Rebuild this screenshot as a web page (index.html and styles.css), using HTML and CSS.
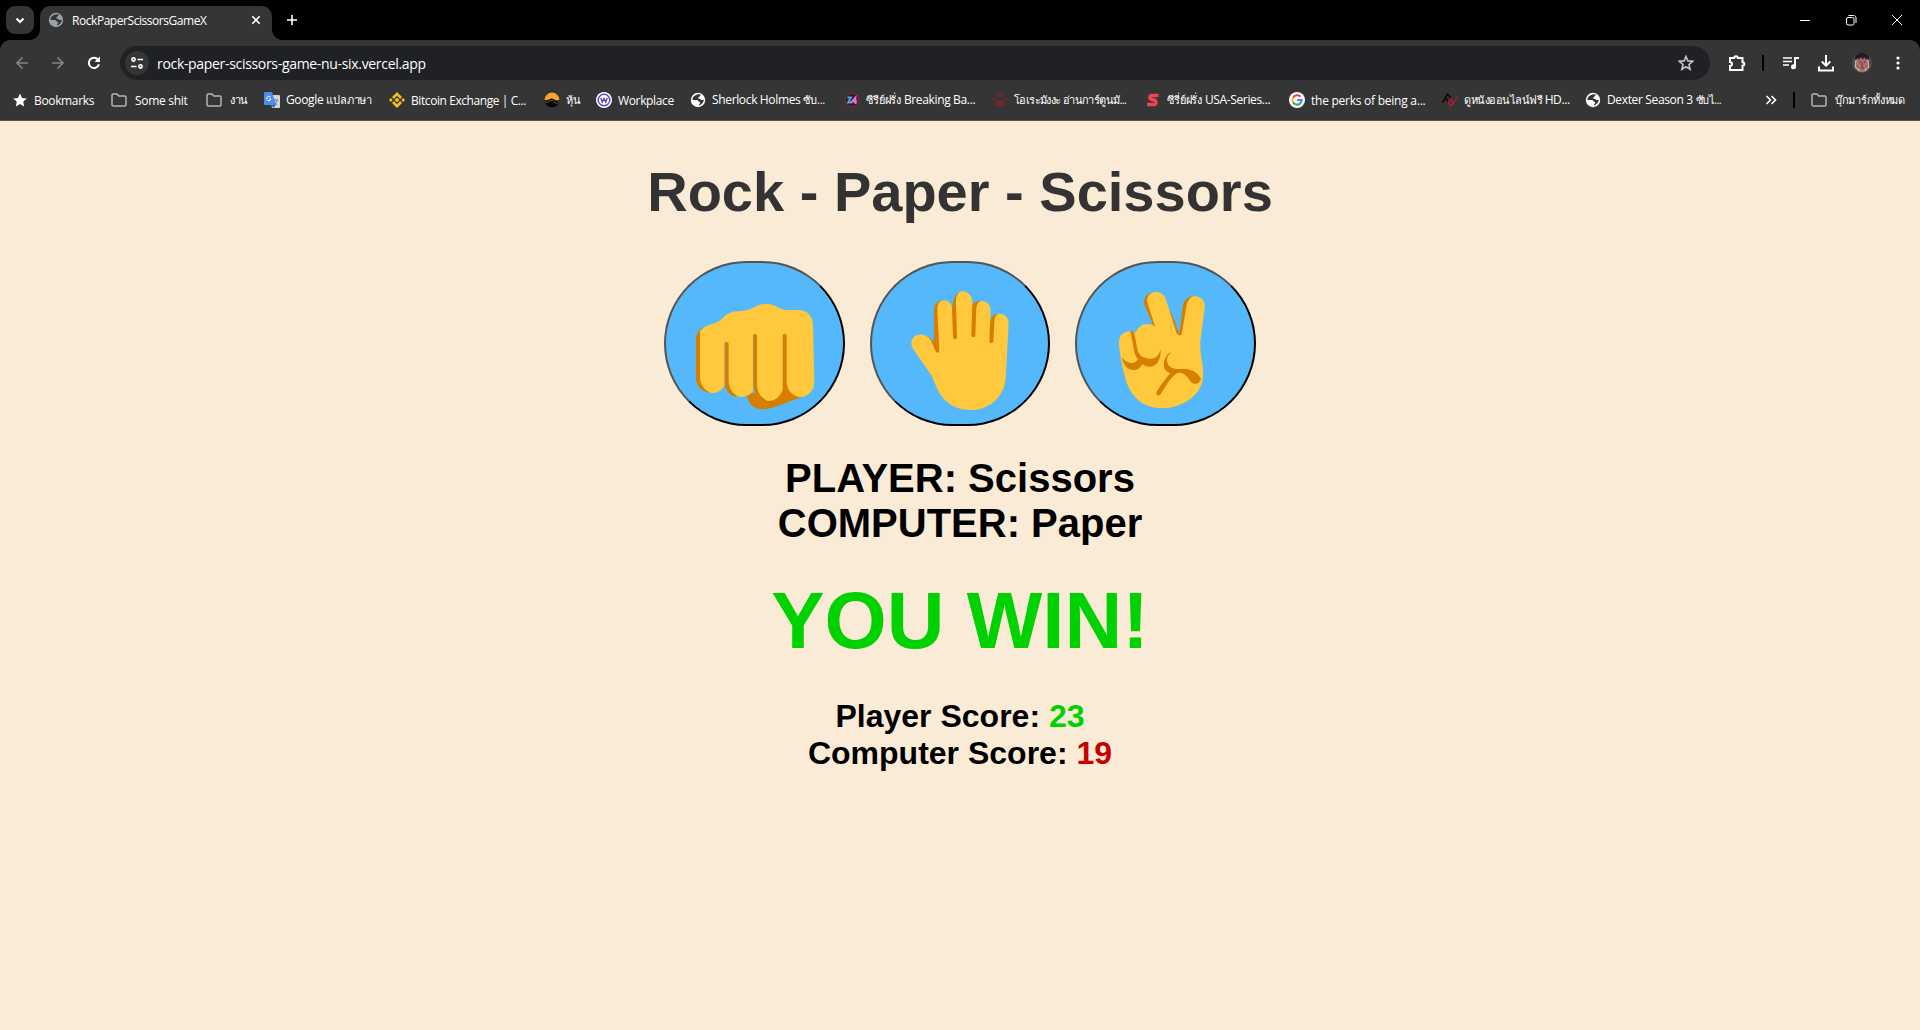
FILE: index.html
```html
<!DOCTYPE html>
<html lang="en">
<head>
<meta charset="utf-8">
<title>RockPaperScissorsGameX</title>
<link rel="stylesheet" href="styles.css">
</head>
<body>
<svg width="0" height="0" class="defs">
  <symbol id="globe" viewBox="0 0 16 16"><circle cx="8" cy="8" r="7.200" fill="currentColor"/><path class="land" d="M7.500 2.500c1.300-.5 2.700-.3 3.800.3-.6.7-1.800.8-1.800 1.700 0 1-1.500.6-1.500 1.500 0 .8 1.400.5 2.200 1 .9.600 1.200 1.200 2.300 1 .5 0 1-.3 1.300 0-.3 2.400-2.100 4.700-4.600 5.400-.5-.600-.1-1.300.5-1.700.8-.700.500-1.700-.5-1.900-1-.2-.9-1.600-2.200-1.700-1.500-.2-3 .2-4.600-.4.100-2.500 2.400-4.800 5.100-5.200z"/></symbol>
  <symbol id="folder" viewBox="0 0 16 14"><path d="M1 2.300C1 1.500 1.500 1 2.300 1H6l1.700 2h6c.8 0 1.300.5 1.300 1.300v7.400c0 .8-.5 1.300-1.300 1.300H2.300C1.500 13 1 12.500 1 11.700z" fill="none" stroke="#b5b5b5" stroke-width="1.500"/></symbol>
</svg>

<header class="browser">
  <div class="tabs">
    <div class="search-tabs"><svg width="10" height="7" viewBox="0 0 10 7"><path d="M1.500 1.500 5 5l3.500-3.500" class="line w2"/></svg></div>
    <div class="tab">
      <svg class="globe favicon" width="16" height="16"><use href="#globe"/></svg>
      <span class="tab-title">RockPaperScissorsGameX</span>
      <svg width="10" height="10" viewBox="0 0 10 10"><path d="m1.300 1.300 7.400 7.400m0-7.400L1.300 8.700" class="line w15"/></svg>
    </div>
    <svg class="new-tab" width="12" height="12" viewBox="0 0 12 12"><path d="M6 1v10M1 6h10" class="line w15"/></svg>
    <div class="window-buttons">
      <svg width="12" height="12" viewBox="0 0 12 12"><path d="M1 6.500h10" class="line"/></svg>
      <svg width="12" height="12" viewBox="0 0 12 12"><rect x="1.500" y="3.500" width="7.500" height="7.500" rx="1.500" class="line"/><path d="M3.500 1.500h5c1.500 0 2.500 1 2.500 2.500v5" class="line"/></svg>
      <svg width="12" height="12" viewBox="0 0 12 12"><path d="m1 1 10 10m0-10L1 11" class="line"/></svg>
    </div>
  </div>

  <div class="toolbar">
    <div class="nav">
      <svg class="dim" width="14" height="14" viewBox="0 0 14 14"><path d="M13 7H2m5.500-5.500L2 7l5.500 5.500" class="line w15"/></svg>
      <svg class="dim" width="14" height="14" viewBox="0 0 14 14"><path d="M1 7h11M6.500 1.500 12 7l-5.500 5.500" class="line w15"/></svg>
      <svg width="14" height="14" viewBox="0 0 14 14"><path d="M12 8.300A5.200 5.200 0 1 1 11 3.500L12.300 5" class="line w2"/><path d="M13 .5V6H7.500z" fill="currentColor"/></svg>
    </div>
    <div class="address">
      <div class="site-info"><svg width="14" height="12" viewBox="0 0 14 12"><circle cx="3.500" cy="2.500" r="1.600" class="line w15"/><path d="M7.500 2.500H13M1 9.500h5.500" class="line w15"/><circle cx="10.500" cy="9.500" r="1.600" class="line w15"/></svg></div>
      <span class="url">rock-paper-scissors-game-nu-six.vercel.app</span>
      <svg class="star" width="16" height="16" viewBox="0 0 16 16"><path d="m8 1.500 1.900 4.400 4.700.4-3.600 3.200 1.100 4.700L8 11.700l-4.100 2.500L5 9.500 1.400 6.300l4.700-.4z" class="line w15"/></svg>
    </div>
    <div class="actions">
      <svg width="18" height="18" viewBox="0 0 18 18"><path d="M2 4h4.200a1.800 1.800 0 0 1 3.600 0H14.500v4.200a1.800 1.800 0 0 1 0 3.600V16H2v-4a2 2 0 0 0 0-4z" class="line w2"/></svg>
      <i class="divider"></i>
      <svg width="16" height="14" viewBox="0 0 16 14"><path d="M0 2h9M0 5.500h9M0 9h6" class="line w15"/><path d="M12 11V2h4" class="line w2"/><circle cx="10.500" cy="10.800" r="2.500" fill="currentColor"/></svg>
      <svg width="16" height="17" viewBox="0 0 16 17"><path d="M8 0v10M3.800 6.500 8 10.700l4.200-4.200M1 11.500V15.500h14v-4" class="line w2"/></svg>
      <svg width="20" height="20" viewBox="0 0 20 20"><circle cx="10" cy="10" r="10" fill="#4f4a58"/><path d="M5 6c0-3 10-3 10.500 0l-.5 7-3 6H8l-3-6z" fill="#a96f6c"/><path d="M3 7C2 2 7 0 10 0s8 2 7 7l-2-2-1 2-2-3-1 3-2-3-2 3-1-2z" fill="#201d25"/><path d="M7 9h2m3 0h2m-4 0v5m-1 1h3" stroke="#63383f" fill="none"/><path d="M4 7 3.500 14l4 4M16 7l.5 7-4 4" stroke="#eda996" stroke-width="1.500" fill="none"/></svg>
      <svg width="4" height="14" viewBox="0 0 4 14" fill="currentColor"><circle cx="2" cy="2" r="1.600"/><circle cx="2" cy="7" r="1.600"/><circle cx="2" cy="12" r="1.600"/></svg>
    </div>
  </div>

  <nav class="bookmarks">
    <div class="bookmark-list">
      <a><svg width="16" height="16" viewBox="0 0 16 16"><path d="m8 1.500 2 4.500 4.800.5-3.600 3.200 1 4.800L8 12l-4.200 2.500 1-4.800L1.200 6.500 6 6z" fill="#fff"/></svg><span>Bookmarks</span></a>
      <a class="loose"><svg width="16" height="14"><use href="#folder"/></svg><span>Some shit</span></a>
      <a class="loose"><svg width="16" height="14"><use href="#folder"/></svg><span class="th">งาน</span></a>
      <a><svg width="16" height="16" viewBox="0 0 16 16"><path d="M6 3h9q1 0 1 1v11q0 1-1 1H8z" fill="#d5d5d5"/><path d="M9 8h5m-2.500-1v1m2 0q-1 3-3 4m-.5-3 3 4" stroke="#6c858c" fill="none"/><path d="M1 0h7l4 13H1q-1 0-1-1V1q0-1 1-1z" fill="#4b8bf5"/><path d="m8 13h4l-3 3z" fill="#2456b3"/><path d="M6.500 5A2.200 2.200 0 1 0 7 7H5" stroke="#fff" fill="none"/></svg><span>Google <b class="th wide">แปลภาษา</b></span></a>
      <a><svg width="16" height="16" viewBox="0 0 16 16" fill="#f3ba2f"><path d="m8 0 5 5-1.900 1.900L8 3.800 4.900 6.900 3 5zM8 16l5-5-1.900-1.900L8 12.200 4.900 9.100 3 11zM0 8l1.900-1.900L3.800 8 1.900 9.900zm12.200 0 1.900-1.900L16 8l-1.900 1.900zM8 5.500 10.500 8 8 10.500 5.500 8z"/></svg><span class="tight">Bitcoin Exchange | C...</span></a>
      <a><svg width="16" height="16" viewBox="0 0 16 16"><circle cx="8" cy="8" r="7.500" fill="#080808"/><path d="M.5 8a7.500 7.500 0 0 1 15 0C11 10 9 5 6 7Q3 9 .5 8z" fill="#f5a52d"/><path d="M1 10q3 1 5-1t5 1 4-1" stroke="#66543c" fill="none"/></svg><span class="th">หุ้น</span></a>
      <a><svg width="16" height="16" viewBox="0 0 16 16"><circle cx="8" cy="8" r="8" fill="#fff"/><circle cx="8" cy="8" r="5.800" stroke="#5744c7" stroke-width="1.400" fill="none"/><path d="m4.800 6 1.500 4L8 6.500 9.700 10l1.500-4" stroke="#4931ba" stroke-width="1.300" fill="none"/></svg><span>Workplace</span></a>
      <a><svg class="globe" width="16" height="16"><use href="#globe"/></svg><span>Sherlock Holmes <b class="th wide">ซับ...</b></span></a>
      <a><svg width="16" height="16" viewBox="0 0 16 16"><circle cx="8" cy="8" r="7" stroke="#a6232e" fill="#242536"/><path d="M3.500 5.500H7L4 10.500h4" stroke="#48a5e5" stroke-width="1.800" fill="none"/><path d="M11.500 12V5.500L8 9.500h5" stroke="#ef71c9" stroke-width="1.800" fill="none"/></svg><span><b class="th wide">ซีรีย์ฝรั่ง</b> Breaking Ba...</span></a>
      <a><svg width="16" height="16" viewBox="0 0 16 16" fill="#6a2b2e"><ellipse cx="2.500" cy="7" rx="1.500" ry="2"/><ellipse cx="6" cy="3" rx="1.600" ry="2.300"/><ellipse cx="10.500" cy="3" rx="1.600" ry="2.300"/><ellipse cx="14" cy="7" rx="1.500" ry="2"/><path d="M8 7.500c3 0 5 3.500 5 5.500 0 3-3 1.500-5 1.500S3 16 3 13c0-2 2-5.500 5-5.500z"/></svg><span class="th snug">โอเระมังงะ อ่านการ์ตูนมั...</span></a>
      <a><svg width="16" height="16" viewBox="0 0 16 16"><path d="M13.500 3.500H7Q4.500 3.500 5 5.500t3 2.300 3 2.200-2 2.500H2" stroke="#ef4453" stroke-width="3.600" fill="none"/></svg><span><b class="th wide">ซีรี่ย์ฝรั่ง</b> USA-Series...</span></a>
      <a><svg width="16" height="16" viewBox="0 0 16 16"><circle cx="8" cy="8" r="8" fill="#fff"/><g fill="none" stroke-width="2"><path d="M4 5.700A4.700 4.700 0 0 1 11.500 4.800" stroke="#ea4335"/><path d="M4 5.700a4.700 4.700 0 0 0 0 4.600" stroke="#fbbc05"/><path d="M4 10.300a4.700 4.700 0 0 0 7 1.300" stroke="#34a853"/><path d="M11 11.600A4.700 4.700 0 0 0 12.700 8H8" stroke="#4285f4"/></g></svg><span class="roomy">the perks of being a...</span></a>
      <a><svg width="16" height="16" viewBox="0 0 16 16" fill="none"><path d="M.5 10.500 5.500 2 9 6.500l-3 3L3.500 6" stroke="#090909" stroke-width="1.500"/><path d="m6 10 3-3.500L11 12l4.500-7.500M6 10l3 4 3-4" stroke="#a91f3b" stroke-width="1.300"/></svg><span class="tight"><b class="th">ดูหนังออนไลน์ฟรี</b> HD...</span></a>
      <a><svg class="globe" width="16" height="16"><use href="#globe"/></svg><span>Dexter Season 3 <b class="th">ซับไ...</b></span></a>
    </div>
    <div class="overflow">
      <svg width="12" height="10" viewBox="0 0 12 10"><path d="m1.500 1 4 4-4 4M6.500 1l4 4-4 4" class="line w15"/></svg>
      <i class="divider"></i>
      <a class="loose"><svg width="16" height="14"><use href="#folder"/></svg><span class="th all">บุ๊กมาร์กทั้งหมด</span></a>
    </div>
  </nav>
</header>

<main class="game">
  <h1>Rock - Paper - Scissors</h1>
  <div class="choices">
    <button aria-label="Rock"><svg viewBox="33 39 530 483">
      <path fill="#d67e00" d="M275 432c3 28 20 44 45 46 18 1 35-6 58-14l65-24-55-30-60 15z"/>
      <path fill="#d67e00" d="M123 270c0-17 7-31 22-36l30 20 10 170-17 4c-25-1-45-17-45-43z"/>
      <path fill="#d67e00" d="M209 282c0-8 13-8 13 0l32 158c-24 4-45-17-45-42zM295 258c0-8 13-8 13 0l32 194c-20 2-45-20-45-46zM382 258c0-8 14-8 14 0l39 182c-20 6-53-12-53-38z"/>
      <path fill="#ffc83d" d="M135 244c14-20 35-19 55-29 15-9 23-31 64-32 43 0 44-21 79-21 35 1 40 19 64 18h35c25 0 42 19 42 45l4 168c0 27-15 45-40 48-24 0-43-21-43-45V258c0-8-12-8-12 0v162c-8 21-24 34-45 33-20-9-32-27-32-51V258c0-8-12-8-12 0v165c-9 14-26 19-44 17-18-10-29-26-29-49V282c0-8-13-8-13 0v126c-9 16-22 21-39 21-21-7-34-26-34-48z"/>
    </svg></button>
    <button aria-label="Paper"><svg viewBox="35 39 530 483">
      <path fill="#d67e00" d="M190 257c14-1 24 8 31 20V180c0-15 10-28 26-29l30 20c0-20 7-42 24-46l35 45c0-8 9-16 20-17l35 60c0-11 7-19 19-21v150H230z"/>
      <path fill="#ffc83d" d="M231 184c0-20 3-30 18-33 14-1 25 9 26 22l3 89c1 8 12 8 12 0l-3-105c0-18 4-27 15-33 21-1 34 14 34 31l-3 101c0 8 12 8 12 0l3-79c1-16 5-21 15-24 16-1 28 12 28 28l-4 93c0 8 12 8 12 0l3-59c1-14 5-20 14-24 17 0 30 12 29 32l-9 160c-3 56-48 97-105 97-52 0-88-29-105-74l-12-29-53-76c-10-13-11-29-1-39 13-13 38-11 50 6l16 36c5 7 11 6 11-4z"/>
    </svg></button>
    <button aria-label="Scissors"><svg viewBox="37 39 530 483">
      <path fill="#d67e00" d="M285 270l-46-106c-4-17 6-33 21-36l60 60 24 65 10-81c2-21 16-34 35-34l-35 122-50 40z"/>
      <path fill="#ffc83d" d="M282 263L250 163c-5-15-2-29 13-35 16-6 34 0 40 18l32 101c3 10 15 14 17 1l13-78c3-16 10-29 24-32 20 0 34 16 31 36l-13 100c-2 46 11 70 8 105-2 56-60 96-124 96-62-1-96-40-110-93-9-37-18-77-18-105 0-22 15-34 38-34 6 0 9 3 12 4 9-20 27-30 48-23 13 3 17 14 21 27l8 26z"/>
      <path fill="#d67e00" d="M197 244c8-3 13 3 13 10l8 43c4 20 20 31 43 29 16-2 23-17 27-27 1 28-11 50-32 51-10 0-18-3-23-8-6 14-18 19-31 18-16-2-28-19-30-39 10 15 27 24 41 14l7-7c-8-8-9-15-11-24zM320 306c-13 11-19 28-5 43 12 14 41 5 60 10 18 5 28 15 34 28-4 13-15 18-26 12-11-9-19-33-42-31-17 5-37 38-54 66-6 5-14 2-12-7 12-20 26-40 42-57-22-7-25-31-13-50 5-8 10-13 16-14z"/>
    </svg></button>
  </div>
  <div class="picks">PLAYER: Scissors<br>COMPUTER: Paper</div>
  <div class="result">YOU WIN!</div>
  <div class="scores">Player Score: <span class="win">23</span><br>Computer Score: <span class="lose">19</span></div>
</main>
</body>
</html>
```
FILE: styles.css
```css
* { box-sizing: border-box; }
body { margin: 0; height: 1030px; overflow: hidden; background: #faebd7; font-family: "Liberation Sans", Arial, sans-serif; }
svg { display: block; flex: none; }
.defs { position: absolute; }
.browser { height: 121px; background: #000; color: #fff; font-family: "Open Sans", "Noto Sans", sans-serif; font-size: 12px; }
.line { fill: none; stroke: currentColor; stroke-width: 1; }
.w15 { stroke-width: 1.6; }
.w2 { stroke-width: 2; }
.globe { color: #fff; }
.land { fill: #353535; }

.tabs { display: flex; height: 40px; padding-left: 6px; align-items: flex-start; }
.search-tabs { display: grid; place-items: center; width: 28px; height: 28px; margin-top: 6px; border-radius: 9px; background: #353535; }
.tab { position: relative; display: flex; align-items: center; width: 232px; height: 34px; margin: 6px 0 0 6px; padding: 0 11px 6px 8px; border-radius: 10px 10px 0 0; background: #353535; }
.tab::before, .tab::after { content: ""; position: absolute; bottom: 0; width: 10px; height: 10px; }
.tab::before { left: -10px; background: radial-gradient(circle at 0 0, transparent 9.5px, #353535 10px); }
.tab::after { right: -10px; background: radial-gradient(circle at 100% 0, transparent 9.5px, #353535 10px); }
.favicon { color: #9aa0a6; }
.tab-title { flex: 1; margin-left: 8px; white-space: nowrap; letter-spacing: -.45px; }
.new-tab { margin: 14px 0 0 14px; }
.window-buttons { display: flex; gap: 34px; margin: 14px 17px 0 auto; }

.toolbar { display: flex; align-items: center; height: 46px; background: #353535; border-radius: 10px 10px 0 0; }
.nav { display: flex; gap: 22px; width: 120px; padding-left: 15px; }
.dim { color: #858585; }
.address { display: flex; align-items: center; width: 1590px; height: 34px; padding: 0 16px 0 5px; border-radius: 17px; background: #202124; }
.site-info { display: grid; place-items: center; width: 24px; height: 24px; border-radius: 50%; background: #353535; }
.url { flex: 1; margin-left: 8px; font-size: 14px; letter-spacing: -.32px; }
.star { color: #c5c5c5; }
.actions { display: flex; align-items: center; width: 210px; padding-left: 18px; }
.actions .divider { margin: 0 19px 0 16px; }
.actions svg:nth-of-type(2) { margin-right: 19px; }
.actions svg:nth-of-type(3) { margin-right: 18px; }
.actions svg:nth-of-type(4) { margin-right: 24px; }
.divider { width: 2px; height: 16px; background: #000; }

.bookmarks { display: flex; justify-content: space-between; height: 35px; padding: 0 15px 6px 12px; background: #353535; border-bottom: 1px solid #555; }
.bookmark-list { display: grid; grid-template-columns: 99px 95px 58px 125px 155px 52px 94px 154px 148px 153px 144px 153px 143px 140px; align-items: center; }
.bookmarks a { display: flex; align-items: center; gap: 6px; white-space: nowrap; letter-spacing: -.35px; }
.bookmarks .loose { gap: 8px; letter-spacing: -.3px; }
.bookmarks .tight { letter-spacing: -.42px; }
.bookmarks .roomy { letter-spacing: -.25px; }
.th { font-weight: 400; font-size: 11px; letter-spacing: -.5px; }
.wide { letter-spacing: -.15px; }
.snug { letter-spacing: -.6px; }
.overflow { display: flex; align-items: center; gap: 16px; }
.all { width: 70px; letter-spacing: -.3px; }

.game { text-align: center; font-weight: 700; }
h1 { margin: 39px 0 37px; font-size: 56px; line-height: 64px; color: #333; }
.choices { display: flex; justify-content: center; gap: 25px; }
.choices button { width: 180.67px; height: 165px; padding: 0; border: 2px outset #000; border-radius: 200px; background: #54b8fa; }
.choices svg { width: 100%; height: 100%; }
.picks { margin-top: 30px; font-size: 40px; line-height: 45px; }
.result { margin-top: 29px; font-size: 80px; line-height: 92px; color: #00d100; }
.scores { margin-top: 31px; font-size: 32px; line-height: 37px; }
.win { color: #00d100; }
.lose { color: #c80000; }
```
